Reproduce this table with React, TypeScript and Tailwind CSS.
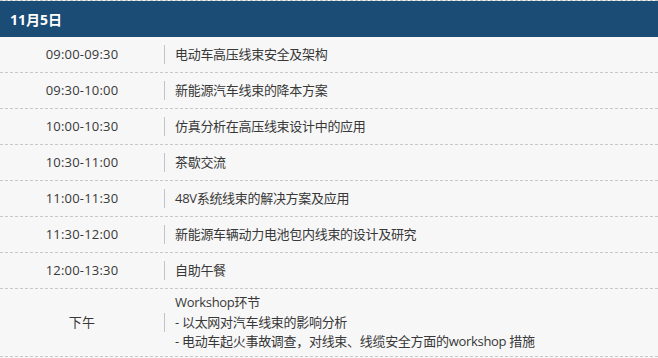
import React from 'react'

const rows = [
    { time: '09:00-09:30', lines: ['电动车高压线束安全及架构'] },
    { time: '09:30-10:00', lines: ['新能源汽车线束的降本方案'] },
    { time: '10:00-10:30', lines: ['仿真分析在高压线束设计中的应用'] },
    { time: '10:30-11:00', lines: ['茶歇交流'] },
    { time: '11:00-11:30', lines: ['48V系统线束的解决方案及应用'] },
    { time: '11:30-12:00', lines: ['新能源车辆动力电池包内线束的设计及研究'] },
    { time: '12:00-13:30', lines: ['自助午餐'] },
    {
        time: '下午',
        lines: [
            'Workshop环节',
            '- 以太网对汽车线束的影响分析',
            '- 电动车起火事故调查，对线束、线缆安全方面的workshop 措施',
        ],
    },
]

const App = () => {
    return (
        <div
            className="w-[658px] h-[358px] bg-[#f7f7f7] text-[#383838] text-[13px] border-t border-dashed border-[#c8c8c8]"
            style={{ fontFamily: '"Open Sans", "Noto Sans CJK SC", sans-serif' }}
        >
            <div className="h-[36px] bg-[#1a4c76] text-white font-bold text-[14px] flex items-center pl-[10px]">
                11月5日
            </div>
            {rows.map((row) => (
                <div
                    key={row.time}
                    className={`flex items-center border-b border-dashed border-[#c8c8c8] ${
                        row.lines.length > 1 ? 'h-[68px]' : 'h-[36px]'
                    }`}
                >
                    <div className="w-[164px] text-center tracking-[0.2px]">{row.time}</div>
                    <div className="w-px h-[19px] bg-[#c4c4c4]" />
                    <div className="pl-[10px] leading-[19.5px] tracking-[-0.3px]">
                        {row.lines.map((line) => (
                            <div key={line}>{line}</div>
                        ))}
                    </div>
                </div>
            ))}
        </div>
    )
}

export default App
